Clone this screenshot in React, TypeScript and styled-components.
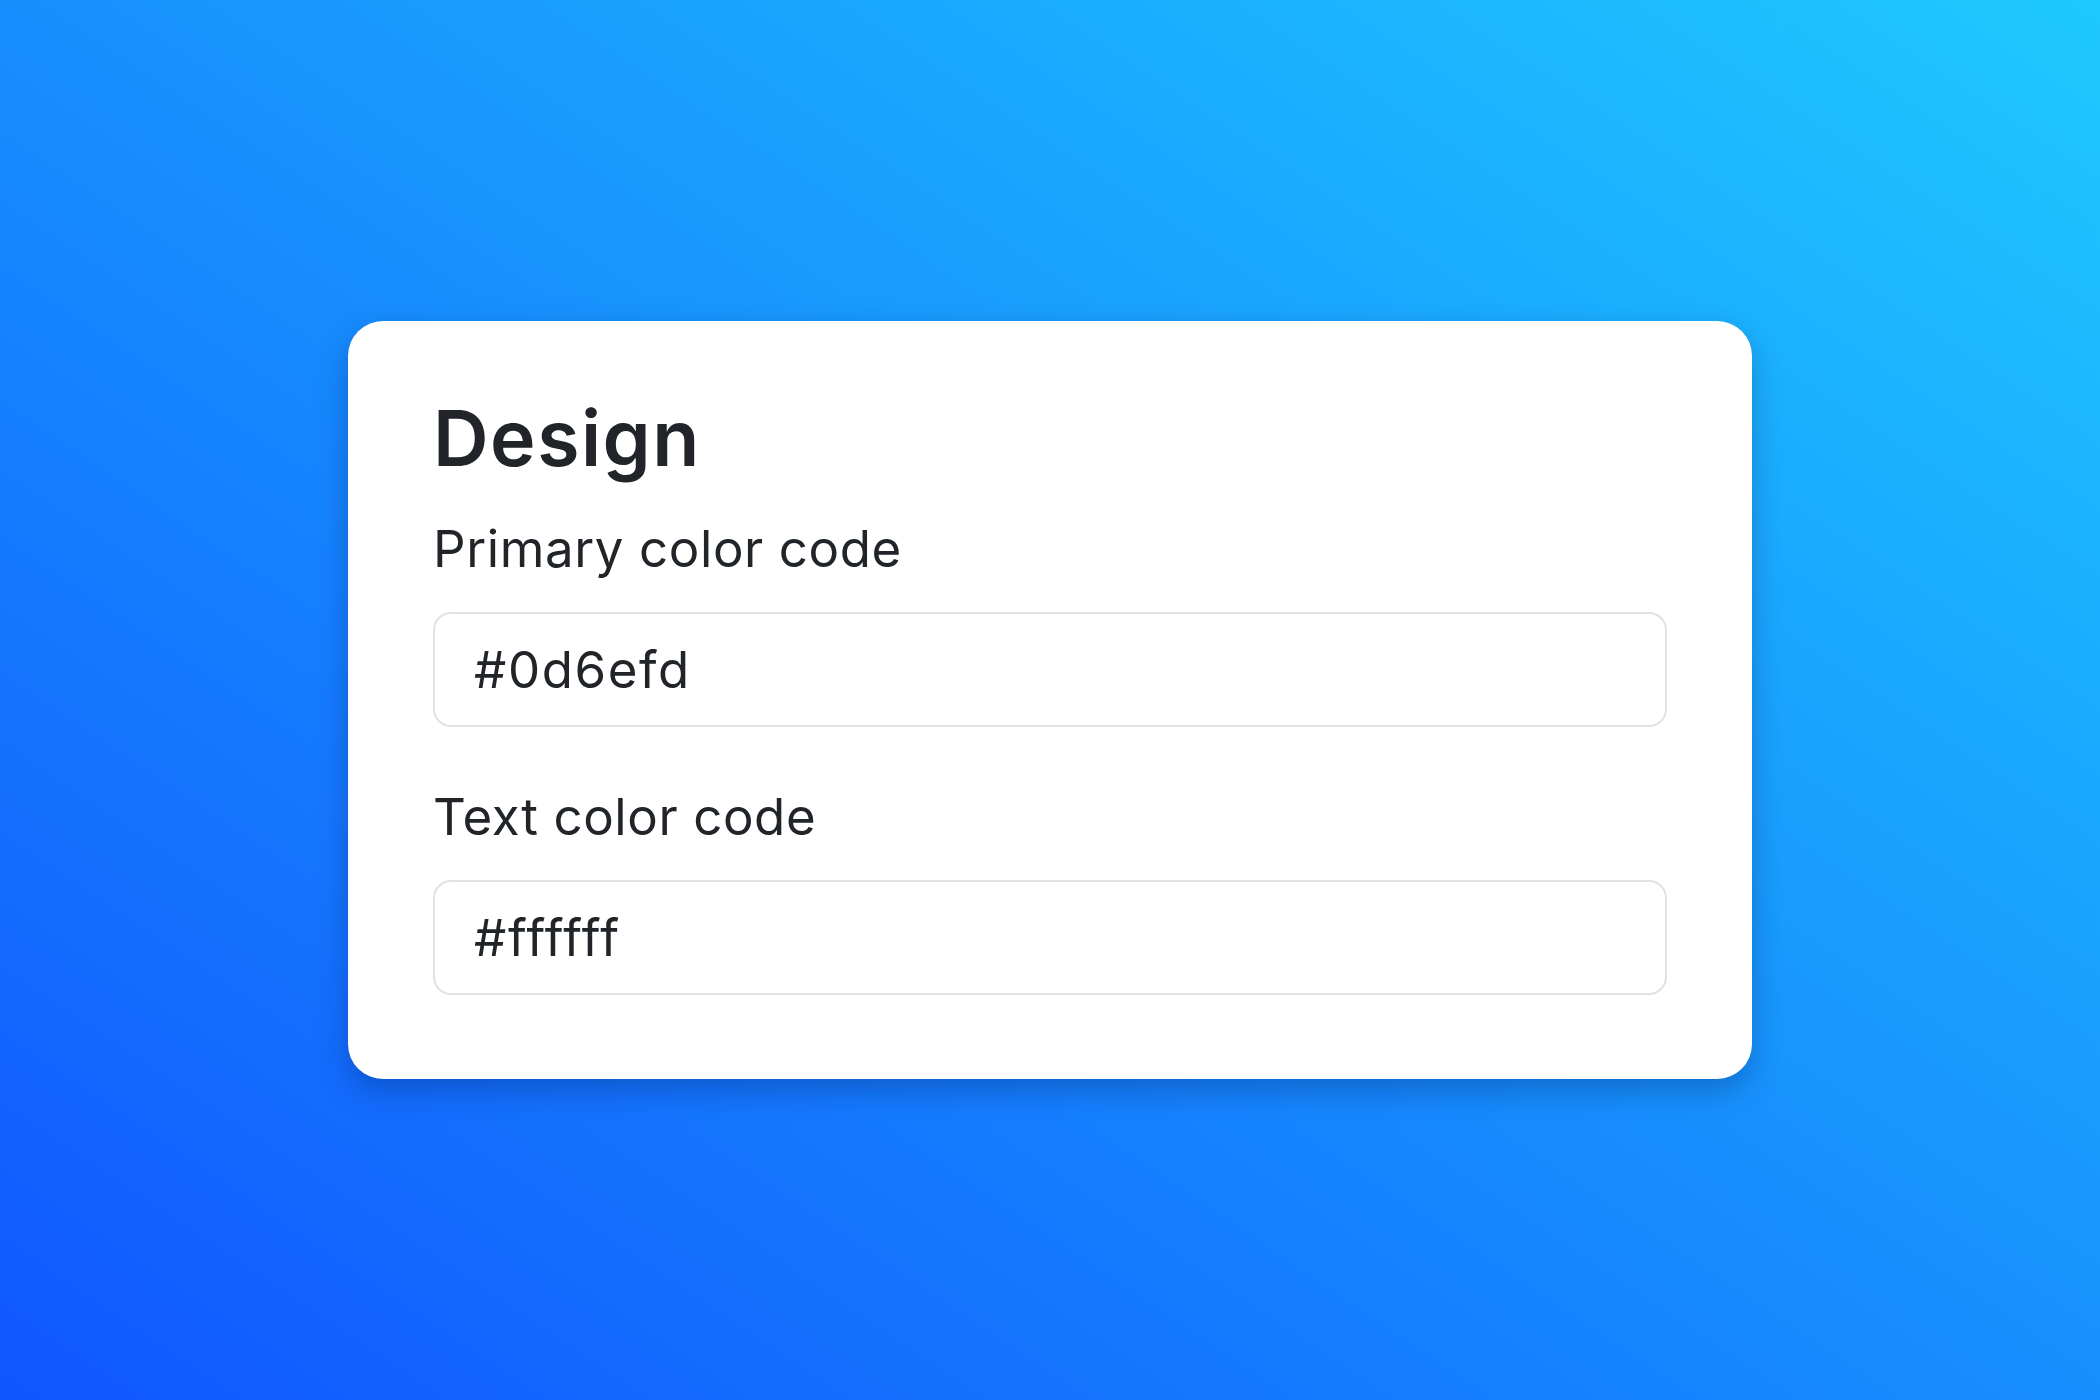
import styled, { createGlobalStyle } from "styled-components";

const GlobalStyle = createGlobalStyle`
  * {
    margin: 0;
    padding: 0;
    box-sizing: border-box;
  }

  html, body, #root {
    height: 100%;
    width: 100%;
  }

  body {
    font-family: Inter, "Noto Sans", sans-serif;
    color: #212529;
  }
`;

const Page = styled.div`
  display: flex;
  align-items: center;
  justify-content: center;
  min-height: 100vh;
  width: 100%;
  background: linear-gradient(to top right, #1156ff 0%, #178ffe 50%, #1ec9ff 100%);
`;

const Card = styled.section`
  width: 1404px;
  padding: 71px 85px 84px;
  background: #ffffff;
  border-radius: 35px;
  box-shadow: 0 12px 30px rgba(0, 20, 80, 0.28);
`;

const Title = styled.h2`
  font-size: 77px;
  line-height: 92px;
  font-weight: 600;
  letter-spacing: 1.5px;
  color: #212529;
  margin-bottom: 34px;
`;

const Field = styled.div<{ $last?: boolean }>`
  display: flex;
  flex-direction: column;
  margin-bottom: ${(p) => (p.$last ? "0" : "59px")};
`;

const Label = styled.label`
  font-size: 51px;
  line-height: 61px;
  font-weight: 400;
  letter-spacing: 0.6px;
  color: #212529;
  margin-bottom: 33px;
`;

const Input = styled.input`
  width: 100%;
  height: 115px;
  padding: 0 39px;
  font-family: Inter, "Liberation Sans", sans-serif;
  font-size: 51px;
  letter-spacing: 1.6px;
  color: #212529;
  background: #ffffff;
  border: 2px solid #dfe2e6;
  border-radius: 18px;
  outline: none;
`;

const fields = [
  { id: "primary", label: "Primary color code", value: "#0d6efd" },
  { id: "text", label: "Text color code", value: "#ffffff" },
];

export default function App() {
  return (
    <>
      <GlobalStyle />
      <Page>
        <Card>
          <Title>Design</Title>
          {fields.map((f, i) => (
            <Field key={f.id} $last={i === fields.length - 1}>
              <Label htmlFor={f.id}>{f.label}</Label>
              <Input id={f.id} type="text" defaultValue={f.value} />
            </Field>
          ))}
        </Card>
      </Page>
    </>
  );
}
